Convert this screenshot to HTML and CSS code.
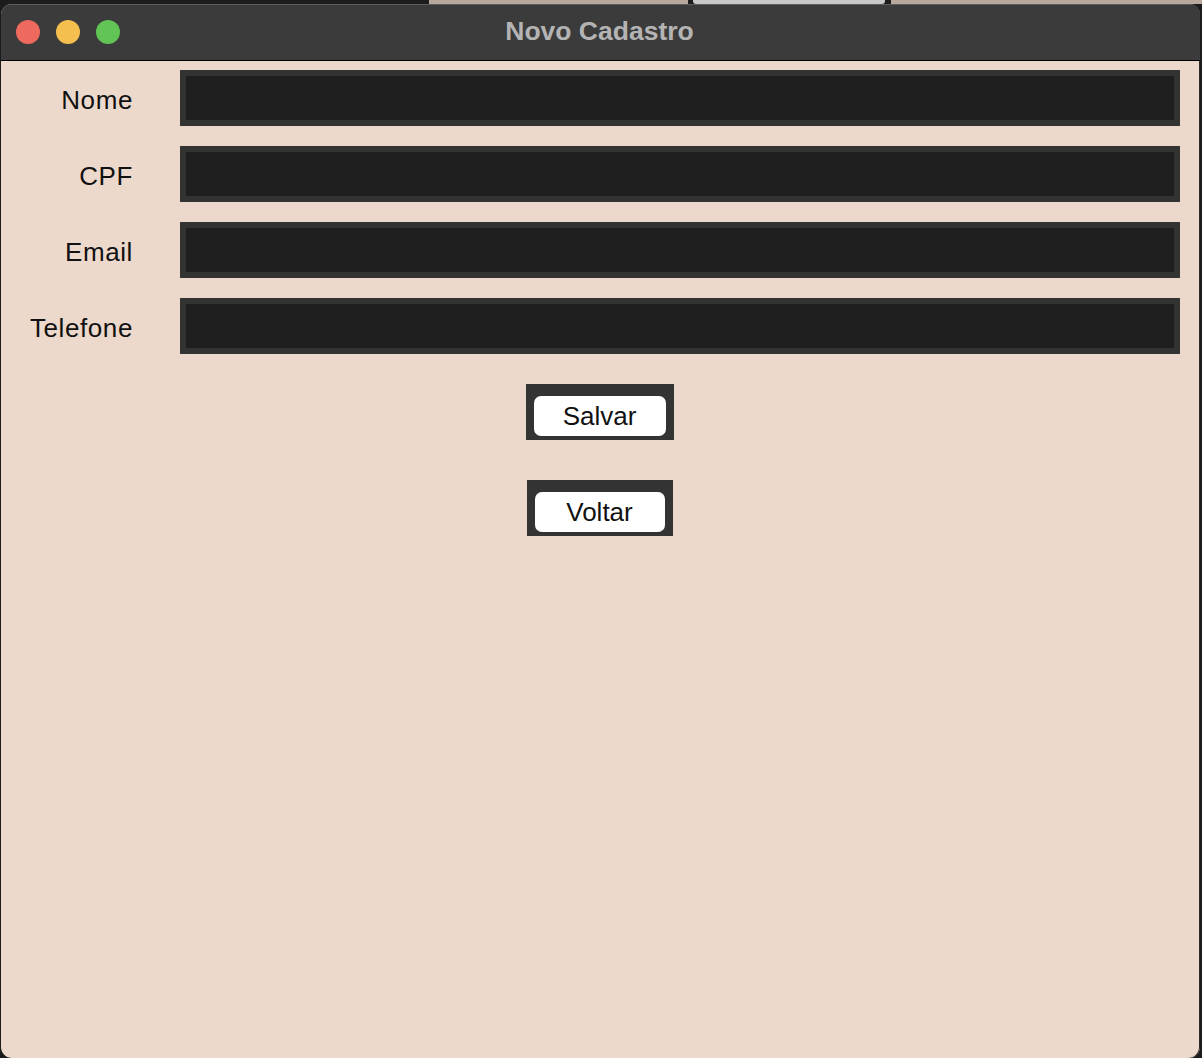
FILE: index.html
```html
<!DOCTYPE html>
<html lang="pt">
<head>
<meta charset="utf-8">
<title>Novo Cadastro</title>
<link rel="stylesheet" href="styles.css">
</head>
<body>
<div class="backdrop">
  <span class="seg seg-dark1"></span>
  <span class="seg seg-pink"></span>
  <span class="seg seg-dark2"></span>
  <span class="seg seg-gray"></span>
  <span class="seg seg-dark3"></span>
  <span class="seg seg-pink2"></span>
</div>
<div class="window">
  <div class="titlebar">
    <div class="lights">
      <span class="light red"></span>
      <span class="light yellow"></span>
      <span class="light green"></span>
    </div>
    <div class="title">Novo Cadastro</div>
  </div>
  <div class="content">
    <div class="form">
      <label class="label">Nome</label><div class="field"></div>
      <label class="label">CPF</label><div class="field"></div>
      <label class="label">Email</label><div class="field"></div>
      <label class="label">Telefone</label><div class="field"></div>
    </div>
    <div class="actions">
      <div class="btn-frame"><div class="btn btn-salvar">Salvar</div></div>
      <div class="btn-frame"><div class="btn btn-voltar">Voltar</div></div>
    </div>
  </div>
</div>
</body>
</html>
```

FILE: styles.css
```css
* { box-sizing: border-box; }
html, body {
  margin: 0;
  padding: 0;
  background: #1c1c1c;
  width: 1202px;
  height: 1058px;
  overflow: hidden;
  font-family: "Liberation Sans", Arial, sans-serif;
}
.backdrop {
  display: flex;
  height: 4px;
}
.seg { display: block; height: 4px; }
.seg-dark1 { width: 429px; background: #1c1c1c; }
.seg-pink { width: 259px; background: #b9a89e; }
.seg-dark2 { width: 5px; background: #1c1c1c; }
.seg-gray { width: 192px; background: #c9c9c9; border-radius: 0 0 3px 3px; }
.seg-dark3 { width: 6px; background: #1c1c1c; }
.seg-pink2 { flex: 1; background: #b9a89e; }

.window {
  margin-left: 1px;
  width: 1199px;
  height: 1054px;
  border-radius: 11px;
  overflow: hidden;
  background: #edd9cc;
  display: flex;
  flex-direction: column;
  box-shadow: inset -1px 0 0 #2a2a2a;
}
.titlebar {
  height: 57px;
  flex: none;
  background: #3b3b3b;
  border-top: 1px solid #5e5e5e;
  border-bottom: 1px solid #000;
  display: flex;
  align-items: center;
  justify-content: center;
  position: relative;
}
.lights {
  position: absolute;
  left: 15px;
  top: 15px;
  display: flex;
  gap: 16px;
}
.light {
  width: 24px;
  height: 24px;
  border-radius: 50%;
  display: block;
}
.red { background: #ee6a5f; }
.yellow { background: #f5bf4f; }
.green { background: #61c454; }
.title {
  color: #b4b4b4;
  font-weight: bold;
  font-size: 26.5px;
  margin-top: -2px;
  margin-left: -2px;
}
.content {
  flex: 1;
  padding: 9px 0 0 0;
}
.form {
  display: grid;
  grid-template-columns: 131px 1000px;
  column-gap: 48px;
  row-gap: 20px;
  align-items: center;
}
.label {
  text-align: right;
  font-size: 26px;
  letter-spacing: 0.6px;
  color: #111;
  padding-top: 4px;
  margin-right: -1px;
}
.field {
  height: 56px;
  background: #1f1f1f;
  border: 6px solid #333333;
}
.actions {
  margin-top: 30px;
  display: flex;
  flex-direction: column;
  align-items: center;
  gap: 40px;
  padding-right: 2px;
}
.btn-frame {
  background: #333333;
  padding: 12px 8px 4px 8px;
}
.btn {
  height: 40px;
  background: #ffffff;
  border-radius: 7px;
  font-size: 26px;
  color: #111;
  display: flex;
  align-items: center;
  justify-content: center;
}
.btn-salvar { width: 132px; }
.btn-voltar { width: 130px; }
```
